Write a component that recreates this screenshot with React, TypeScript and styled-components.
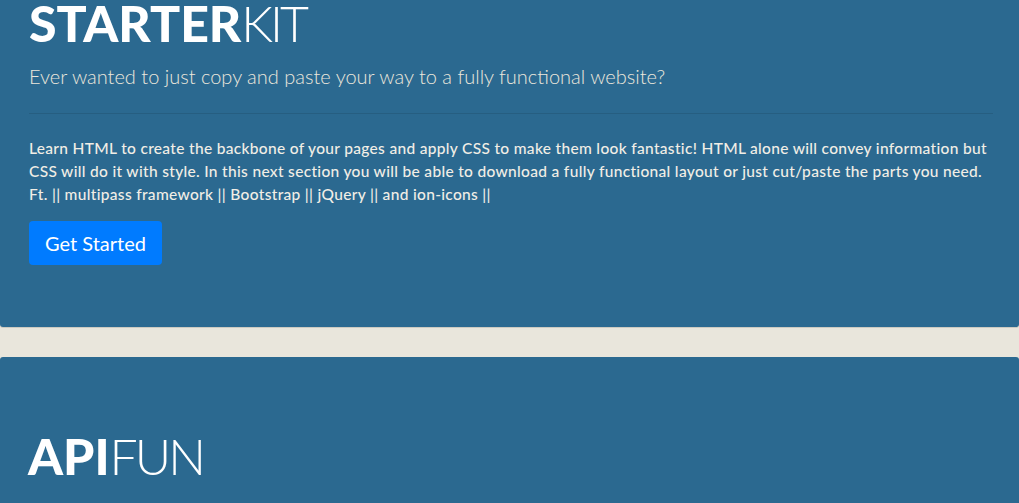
import styled, { createGlobalStyle } from 'styled-components'

const GlobalStyle = createGlobalStyle`
  html, body {
    margin: 0;
    padding: 0;
    background: #e9e6dc;
    overflow: hidden;
  }
  body {
    font-family: Lato, "Open Sans", sans-serif;
  }
`

const Page = styled.main`
  display: flex;
  flex-direction: column;
  gap: 30px;
`

const Panel = styled.section<{ $first?: boolean }>`
  background: #2b6990;
  color: #ece9df;
  padding: ${p => (p.$first ? '0 26px 62px 29px' : '76px 26px 60px 28px')};
  border-radius: ${p => (p.$first ? '0 0 3px 3px' : '3px 3px 0 0')};
  box-shadow: 0 1px 0 rgba(0, 0, 0, 0.12);
`

const Title = styled.h1`
  margin: -2px 0 0;
  font-family: Lato, sans-serif;
  font-size: 50px;
  line-height: 1;
  color: #ffffff;
  font-weight: 900;
  > span {
    font-weight: 300;
    letter-spacing: -3px;
  }
`

const Lead = styled.p`
  margin: 15px 0 0;
  font-size: 20px;
  font-weight: 300;
  line-height: 1.3;
  color: #ebe7dc;
`

const Rule = styled.hr`
  margin: 24px 0 23px;
  border: 0;
  border-top: 1px solid rgba(0, 0, 0, 0.1);
`

const Body = styled.p`
  margin: 0;
  font-size: 15.5px;
  line-height: 23px;
  font-weight: 500;
  letter-spacing: 0.32px;
  color: #f1eee6;
`

const Button = styled.button`
  margin-top: 15px;
  height: 44px;
  padding: 0 16px;
  border: 0;
  border-radius: 4px;
  background: #007bff;
  color: #fff;
  font-family: Lato, sans-serif;
  font-size: 20px;
  cursor: pointer;
`

export default function App() {
  return (
    <>
      <GlobalStyle />
      <Page>
        <Panel $first>
          <Title>STARTER<span>KIT</span></Title>
          <Lead>Ever wanted to just copy and paste your way to a fully functional website?</Lead>
          <Rule />
          <Body>
            Learn HTML to create the backbone of your pages and apply CSS to make them look fantastic! HTML alone
            will convey information but CSS will do it with style. In this next section you will be able to download a
            fully functional layout or just cut/paste the parts you need. Ft. || multipass framework || Bootstrap ||
            jQuery || and ion-icons ||
          </Body>
          <Button>Get Started</Button>
        </Panel>
        <Panel>
          <Title>API<span>FUN</span></Title>
        </Panel>
      </Page>
    </>
  )
}
